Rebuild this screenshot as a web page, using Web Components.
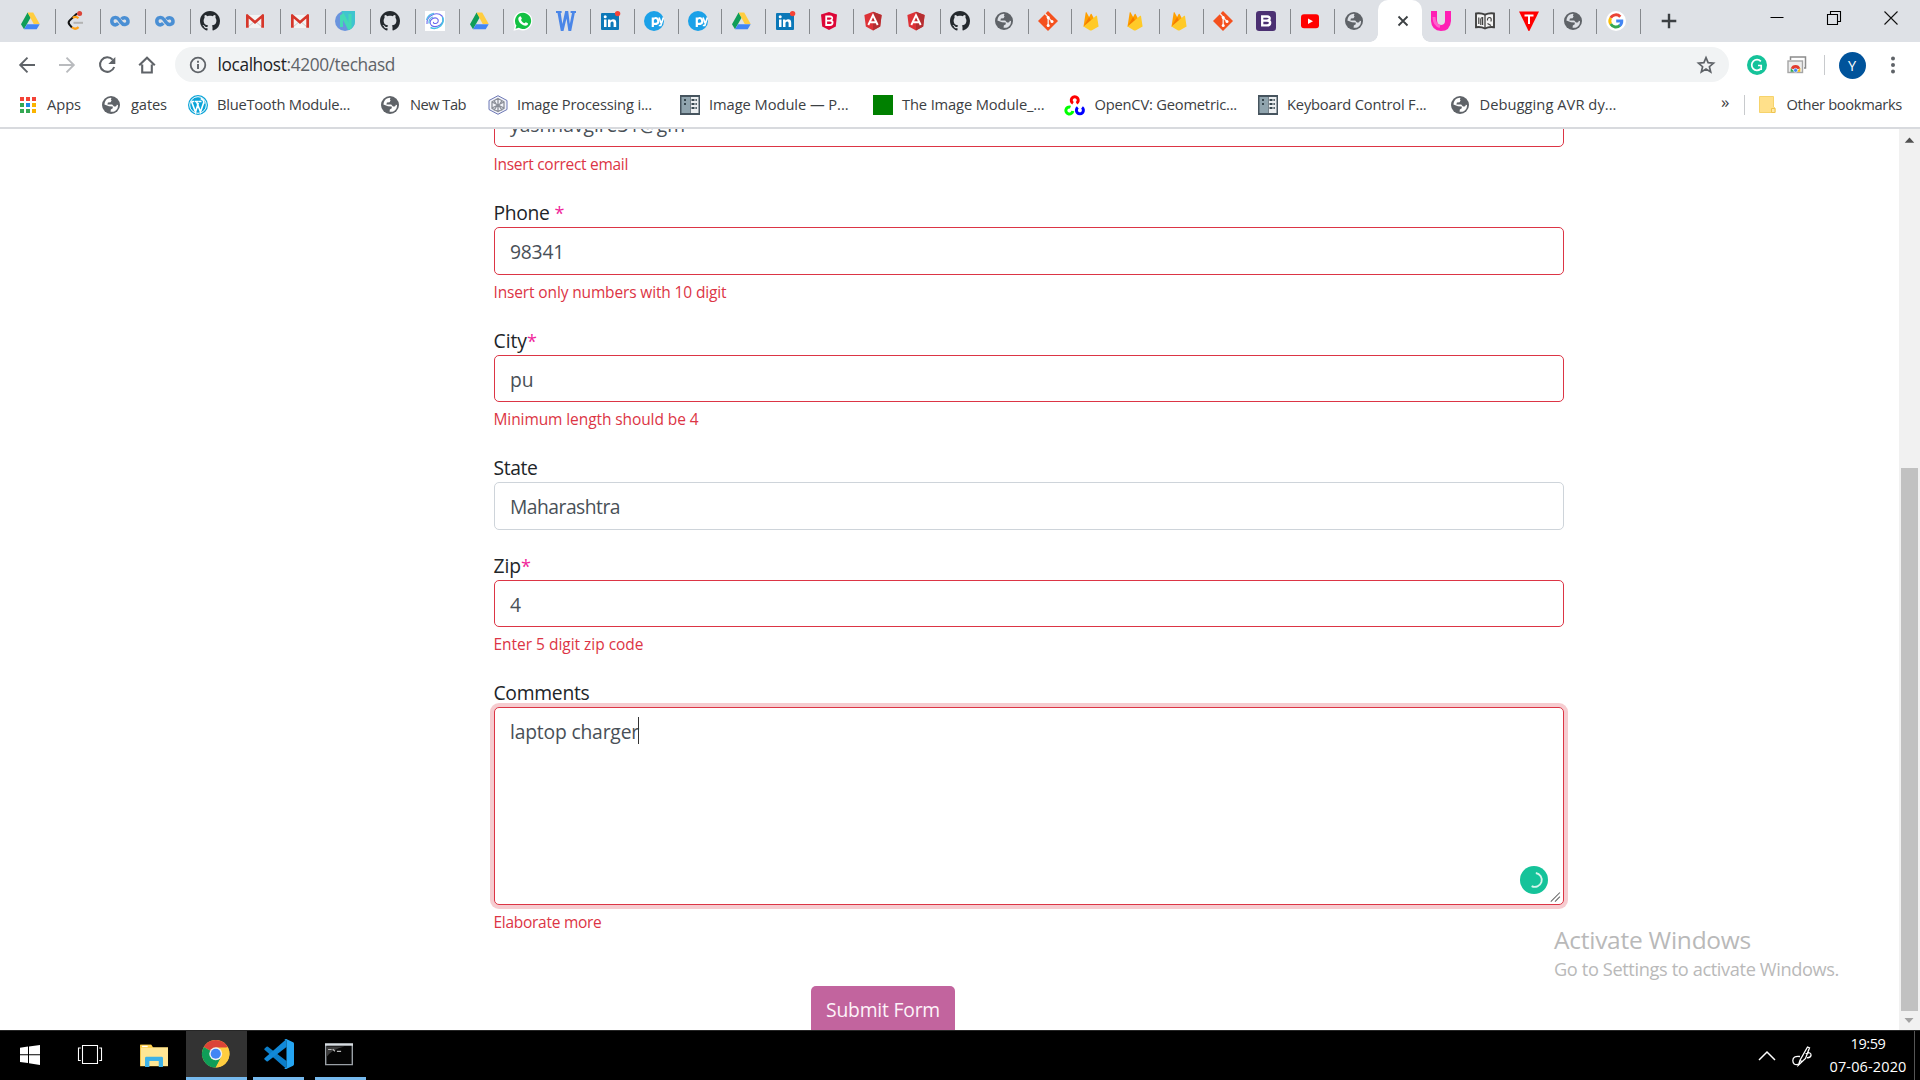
<!DOCTYPE html>
<html lang="en">
<head>
<meta charset="utf-8">
<title>techasd</title>
<style>
html,body{margin:0;height:100%;overflow:hidden;background:#fff}
body{font-family:"Open Sans","Noto Sans",sans-serif}
</style>
</head>
<body>
<desktop-screen></desktop-screen>
<script>
const ICONS = {
drive:`<path fill="#0f9d58" d="M7.6 1.5 1 13.2 4 18.2 10.7 6.6z"/><path fill="#ffcd40" d="M7.6 1.5h5.6l6.5 11.6h-6z"/><path fill="#4285f4" d="M7 13.2h12.7l-3 5H4z"/>`,
leet:`<path d="M12 2.5 4.5 9.6q-1.7 1.9 0 4L7 16.6" fill="none" stroke="#111" stroke-width="2"/><path d="M7 16.3q3 3 6.600-.2" fill="none" stroke="#ffa116" stroke-width="2.2"/><path d="M7.8 6.8q3-2.200 5.600.4" fill="none" stroke="#ffa116" stroke-width="2.2"/><path d="M8.500 11.800h9.500" stroke="#b3b3b3" stroke-width="2"/><circle cx="14.600" cy="2.600" r="2.500" fill="#db4437"/>`,
coursera:`<path d="M8.300 12.300C5.200 15.500 1.800 13.300 1.800 10.100c0-4 5-4.800 7.200-1.500l2.200 3c2.300 3.400 7.200 1.900 6.800-1.700-.5-3.500-4.600-3.900-6.500-1.800" fill="none" stroke="#4a8fd4" stroke-width="3.500"/>`,
github:`<path fill="#24292e" transform="scale(1.25)" d="M8 0C3.580 0 0 3.580 0 8c0 3.540 2.290 6.530 5.470 7.590.4.070.550-.170.550-.380 0-.190-.010-.820-.010-1.490-2.010.370-2.530-.490-2.690-.940-.090-.230-.480-.940-.820-1.130-.280-.150-.680-.520-.010-.530.630-.010 1.080.580 1.230.820.720 1.210 1.870.870 2.330.660.070-.520.280-.870.510-1.070-1.780-.2-3.640-.890-3.640-3.950 0-.870.310-1.590.820-2.150-.080-.2-.360-1.020.080-2.120 0 0 .670-.210 2.200.820.640-.180 1.320-.270 2-.270s1.360.090 2 .270c1.530-1.040 2.200-.820 2.200-.820.440 1.100.160 1.920.080 2.120.510.560.820 1.270.820 2.150 0 3.070-1.870 3.750-3.650 3.950.290.250.540.730.540 1.480 0 1.070-.010 1.930-.010 2.200 0 .210.150.460.550.380A8.010 8.010 0 0 0 16 8c0-4.420-3.580-8-8-8"/>`,
gmail:`<path fill="#f4f4f4" d="M2 4h16v13H2z"/><path d="m3 16 7-6 7 6" fill="none" stroke="#ccc" stroke-width="1"/><path fill="#d6372b" d="M1 4.200q0-1.200 1.300-1.200L10 9.600 17.700 3Q19 3 19 4.200v12.500h-2.700V7.600L10 12.900 3.700 7.600v9.100H1z"/>`,
nstd:`<path fill="#6a94de" d="M10 0h10v10A10 10 0 1 1 10 0z"/><path fill="#3fc4cf" d="M6.500 0H20v10q0 6-5.500 9H13z"/><path fill="#44d9b6" d="M5 4.500V16h3v-7l5 9.500q2 0 3.500-1V3h-3v8.500L8.500 2z"/>`,
swirl:`<path fill="#fff" d="M0 0h20v20H0z"/><g fill="none"><path d="M2 13C1 4.500 12 0 17 5q3 5-2 9-5 3-8.500.5Q3.500 11 7 8q4-2.500 6 .5 1 3-2 4-3 .3-2.500-1.700" stroke="#6a68ee" stroke-width="1.100"/><path d="M5.500 16.500q5 2.500 10-1.500 4-4.500 2-9" stroke="#45bfe4" stroke-width="1.500"/><path d="M1.500 9Q3.500 3 9 2.500M4 12.500q-.5-5 4-6.500" stroke="#58b9e8" stroke-width="1.300"/></g>`,
whatsapp:`<path fill="#fff" d="M10 .4a9.500 9.500 0 1 1-4.200 18.100L.5 19.700l1.300-5A9.500 9.500 0 0 1 10 .4z"/><path fill="#13c143" d="M10 1.800a8.100 8.100 0 1 1-4.200 15L2.500 17.800l.9-3.300A8.100 8.100 0 0 1 10 1.800z"/><path fill="#fff" d="M6.700 5.500c.6-.4 1-.3 1.300.3l.8 1.700c.2.500-.8 1.100-.8 1.500.7 1.500 1.900 2.600 3.400 3.200.5 0 1-1.200 1.500-1l1.900 1c.4.300.1 1.300-.3 1.800-3 2.500-9.300-2-9.200-6.200 0-1 .6-1.900 1.400-2.300z"/>`,
word:`<path d="M0 0h5.600v2H4.700l1.700 11L9.200 0h3l1.600 13L16 2h-1.400V0H20v2h-1.200l-3.600 18h-2.800L10.500 7.500 7.500 20H4.800L1.500 2H0z" fill="#4a86e8"/>`,
linkedin:`<rect x="1" y="2" width="18" height="17" rx="1" fill="#0b78b8"/><path fill="#fff" d="M4 8.500h2.500V16H4zM8 8.500h2.400v1q2.500-2.300 4.800-.7 1 1 1 3V16h-2.600v-3.700q0-2-1.500-1.800-1.600 0-1.600 1.800V16H8z"/><circle cx="5.200" cy="5.800" r="1.500" fill="#fff"/><circle cx="17.600" cy="2.600" r="2.700" fill="#f44336"/>`,
py:`<circle cx="10" cy="10" r="10" fill="#1ba1e8"/><path d="M8.800 16V6.500M8.800 8.500q3.500-3 5 0t-1.300 4.300H9" fill="none" stroke="#fff" stroke-width="2.200"/><path d="m15 6.500 2 5.500M19.400 6.500l-2.600 8h-2" fill="none" stroke="#fff" stroke-width="1.700"/>`,
bshield:`<path fill="#dd0637" d="M10 1 18 3.500l-1.200 12L10 19l-6.800-3.500L2 3.500z"/><path d="M7.200 5.500h4q2.300.2 2 2.200-.3 1.700-2 1.800 2.600.3 2.400 2.300-.3 2.200-2.600 2.200H7.200zM7.500 9.600h3.700" fill="none" stroke="#fff" stroke-width="1.800"/>`,
angular:`<path fill="#dd3237" d="M10 .8 18.600 4l-1.400 11.500L10 19.400l-7.200-3.900L1.400 4z"/><path fill="#b52e31" d="M10 .8 18.600 4l-1.400 11.500L10 19.400z"/><path d="M5.300 14 10 4.200 14.700 14M7 11.200h6" fill="none" stroke="#fff" stroke-width="1.900"/>`,
globe:`<circle cx="10" cy="10" r="9" fill="#5f6368"/><path fill="#dee1e6" class="land" d="M10.500 2.900q-1.300 1.500.1 2.600l-1 1.700-2.700.3-.5 1.900h4.800l1.800 2.200h1.500q1.300-.4 1.200-1.900l1.300.3q.2 4.200-3.200 6.200-2.100 1-4.200.5l.2-2.200 2-1.200-.1-1.800-3.700-.3-4.600-1.800q.5-4.800 4.200-6.100 1.600-.6 2.900-.4z"/>`,
git:`<path fill="#f4511e" d="M10 0 20 10 10 20 0 10z" stroke-linejoin="round"/><path d="m7 2.500 3.200 3.700v8.500M10.200 6.500l3.700 4" fill="none" stroke="#f6e7e0" stroke-width="1.400"/><g fill="#fff"><circle cx="10.200" cy="6.500" r="1.500"/><circle cx="10.200" cy="14.500" r="1.500"/><circle cx="14" cy="10.500" r="1.500"/></g>`,
firebase:`<path fill="#ffa000" d="m2.500 15.500 2.200-14q.4-.8.9 0l2.500 4.600L9.700 3q.4-.7.900 0L17 15.500z"/><path fill="#f57c00" d="m2.500 15.500 5.600-9.400 3 5.400z"/><path fill="#ffca28" d="M2.500 15.500 15.200 4.800q.7-.4.800.3l1.600 10.500-6.600 3.700q-1.200.6-2.300 0z"/>`,
boot:`<rect width="20" height="20" rx="3.200" fill="#4b3072"/><path d="M6.200 5.500h5q2.700.2 2.500 2.200-.2 1.700-2.300 1.800 3 .3 2.800 2.500-.3 2.400-3 2.400h-5zM6.500 9.700h5" fill="none" stroke="#fff" stroke-width="2.300"/>`,
youtube:`<rect x="1" y="3.200" width="18" height="14" rx="3" fill="#f00"/><path fill="#fff" d="m8 7.500 5 2.800-5 2.800z"/>`,
ulogo:`<path fill="#ff1fb4" d="M0 0h6v9.500q.4 4.500 4.500 4.500 3.500-.4 3.500-4V0h6v10q-.8 10-10 10Q.6 19.400 0 10z"/><path d="M3 6q.2 8 6 9.500" stroke="#ff62cc" stroke-width="3" fill="none"/>`,
book:`<path fill="#f4f4f4" stroke="#424242" stroke-width="1.900" d="M1 2.500q5-.8 9 1.200 4-2 9-1.200v13.700q-5-.8-9 1.300-4-2.100-9-1.300z"/><path d="M10 3.500V17.500" stroke="#424242" stroke-width="1.300"/><path d="M3.800 6.500v6.500M5.800 14V8q.3-1.500 1.800-1.500V14M16 14.500l-3.500-2M12.500 9.500q-.3-3 2-3t1.500 4" fill="none" stroke="#424242" stroke-width="1.200"/>`,
tri:`<path fill="#f00" d="M0 .5h20L10.400 20H9.500z"/><path d="M5.500 4.500h9M10 4.500V13" stroke="#fff" stroke-width="2"/>`,
google:`<circle cx="10" cy="10" r="10" fill="#fff"/><g fill="none" stroke-width="2.900"><path stroke="#ea4335" d="M4.700 6.900A6 6 0 0 1 14.300 5.700"/><path stroke="#fbbc05" d="M4.700 13.100a6 6 0 0 1 0-6.200"/><path stroke="#34a853" d="M14 14.400a6 6 0 0 1-9.300-1.300"/><path stroke="#4285f4" d="M10.200 10h5.600q.1 3-2.100 4.600"/></g>`,
plus:`<path d="M10 2.700v14.600M2.700 10h14.600" stroke="#3c4043" stroke-width="2.400"/>`,
tabx:`<path d="m5.500 5.500 9 9m0-9-9 9" stroke="#3c4043" stroke-width="1.800"/>`,
min:`<path d="M3.500 9.500h13" stroke="#000"/>`,
restore:`<path d="M3.500 6.500h10v10h-10zM6.500 6V3.500h10v10H14" fill="none" stroke="#000" stroke-width="1.100"/>`,
close:`<path d="m3.500 3.500 13 13m0-13-13 13" stroke="#111" stroke-width="1.100"/>`,
back:`<path d="M18 10H3.500m7-7.300L3.200 10l7.300 7.300" fill="none" stroke="currentColor" stroke-width="1.900"/>`,
fwd:`<path d="M2 10h14.500M9.500 2.700l7.300 7.300-7.300 7.300" fill="none" stroke="currentColor" stroke-width="1.900"/>`,
reload:`<path d="M15.700 4.600A7.300 7.300 0 1 0 17.200 12" fill="none" stroke="currentColor" stroke-width="2"/><path fill="currentColor" d="M18.300 2v7h-7z"/>`,
home:`<path d="M2.200 10.200 10 2.700l7.800 7.500M5.200 9.500v8h9.600v-8" fill="none" stroke="currentColor" stroke-width="2.100"/>`,
info:`<circle cx="10" cy="10" r="7.300" fill="none" stroke="currentColor" stroke-width="1.800"/><path d="M10 9v5M10 5.800v2" stroke="currentColor" stroke-width="1.900"/>`,
star:`<path d="m10 2.700 2.100 5 5.400.5-4.100 3.500 1.300 5.300-4.700-2.900L5.300 17l1.300-5.300-4.100-3.500 5.400-.5z" fill="none" stroke="#5f6368" stroke-width="1.700"/>`,
grammarly:`<circle cx="10" cy="10" r="10" fill="#15c39a"/><path d="M13.800 6.300A5.300 5.300 0 1 0 13.500 14M15 10.500h-4M14.200 10.500v4.500" fill="none" stroke="#fff" stroke-width="1.700"/>`,
gallery:`<path d="M3.500 5V2h15v11H17" fill="none" stroke="#8c8c8c" stroke-width="1.500"/><rect x="1" y="6" width="14.500" height="11.500" fill="#eee" stroke="#a5a5a5" stroke-width="1.400"/><path fill="#e33b2e" d="M3.800 13.500a5 5 0 0 1 9.500 0l-4.500 1z"/><path fill="#34a853" d="M3.800 13.300 7.500 16.800H3.600z"/><path fill="#fbbc05" d="M9.500 16.800 13.300 13v3.800z"/><circle cx="8.600" cy="15.300" r="2" fill="#4285f4" stroke="#fff" stroke-width=".6"/>`,
kebab:`<g fill="#5f6368"><circle cx="10" cy="3.500" r="2"/><circle cx="10" cy="10" r="2"/><circle cx="10" cy="16.500" r="2"/></g>`,
apps:`<path fill="#f44336" d="M2 2h4v4H2zM8 2h4v4H8zM14 2h4v4h-4z"/><path fill="#34a853" d="M2 8h4v4H2zM2 14h4v4H2z"/><path fill="#1e88e5" d="M8 8h4v4H8z"/><path fill="#34a853" d="M8 14h4v4H8z"/><path fill="#fbb400" d="M14 8h4v4h-4zM14 14h4v4h-4z"/>`,
wp:`<circle cx="10" cy="10" r="10" fill="#0ba4d8"/><circle cx="10" cy="10" r="8.300" fill="none" stroke="#fff" stroke-width="1"/><path d="m3.500 6.500 4 10.500L10.400 8M6.200 6.500h-3M10 6.500H6.800M8.500 6.500l4 10.500 3.200-9.500M13.500 6.500H10.200M12.700 3.600q3.500.8 3.200 5" fill="none" stroke="#fff" stroke-width="1.600"/>`,
hex:`<g fill="none" stroke="#6b76b4" stroke-width="1"><path fill="#f3f4fa" d="m10 .7 9 4.800v9l-9 4.800-9-4.800v-9z"/><path stroke="#8b8f98" stroke-width="1.300" d="m10 3.500 6 3.300v6.500l-6 3.300-6-3.300V6.800zM4 7l12 6M16 7 4 13M10 3.500v13M6 5.500l3 5-3 5M14 5.500l-3 5 3 5"/></g>`,
module:`<path fill="#46545e" d="M0 0h20v20H0z"/><path fill="#90a4ae" d="M1.500 2H10v16H1.500z"/><path fill="#eceff1" d="M10.700 2h7.800v16h-7.800z"/><path d="M4 5h2M4 9h2M11.500 5h3M11.500 9h3M11.500 13h3" stroke="#37474f" stroke-width="2.200"/><path d="M15.500 5h1.300M15.500 9h1.300M15.500 13h1.300" stroke="#37474f" stroke-width="2.200"/>`,
green:`<path fill="#008000" d="M0 0h20v20H0z"/>`,
opencv:`<g fill="none" stroke-width="3"><path stroke="#f00" d="M8 8.300a3.500 3.500 0 1 1 3.500 0"/><path stroke="#0f0" d="M5.500 12.200A3.500 3.500 0 1 0 7.800 16"/><path stroke="#00f" d="M12.800 12.500a3.500 3.500 0 1 0 4.200 0"/></g>`,
folder:`<path fill="#ffe08a" stroke="#f6d36b" d="M2.500 1.500h14V12l1.500 1v4.500H2.500z"/><path fill="#ffe9a6" stroke="#efc44f" d="M14.500 13.500H18v4h-3.500z"/>`,
win:`<path fill="#fff" d="M0 2.700 8 1.600v7.700H0zM9 1.500 20 0v9.300H9zM0 10.300h8V18l-8-1.100zM9 10.300h11V20L9 18.300z"/>`,
task:`<path d="M3.750 1.300h12.500v16.500H3.750zM2.300 3.700H.4v11.400h1.900M17.700 3.700h1.900v11.400h-1.900" fill="none" stroke="#fff" stroke-width=".9"/>`,
explorer:`<path fill="#e8b32e" d="M0 2h8l1.500 2H20v14H0z"/><path fill="#ffe694" d="M.5 4H20v13.800H.5z"/><path fill="#ffd251" d="M.3 2H8l1 2.400H.3z"/><path fill="#fff" d="M1.500 2.800h4v1h-4z"/><path fill="#3db2e8" d="M3.600 18.500V12q0-1 1-1h10.800q1 0 1 1v6.500h-3V14H6.700v4.500z"/>`,
chrome:`<circle cx="10" cy="10" r="10" fill="#fbc940"/><path fill="#db4437" d="M10 10 1.300 5A10 10 0 0 1 18.700 5z"/><path fill="#0f9d58" d="M10 10 1.300 5A10 10 0 0 0 10 20l4-7z"/><path fill="#ffcd40" d="M10 5.500h8.900A10 10 0 0 1 10 20l4-8z"/><circle cx="10" cy="10" r="4.700" fill="#f1f1f1"/><circle cx="10" cy="10" r="3.700" fill="#4285f4"/>`,
vscode:`<path fill="#0b7dc8" d="m.4 6.300 1.300-1.100q.4-.3.900 0L15 14.600V20L.3 7.200q-.3-.5.1-.9z"/><path fill="#1189d8" d="m.4 13.700 1.300 1.100q.4.300.9 0L15 5.400V0L.3 12.800q-.3.500.1.900z"/><path fill="#25a5f2" d="m14.800 0 4.600 2.200q.6.300.6.900v13.800q0 .6-.6.900L14.800 20q-.8.200-1.300-.4l1.500-.6V1L13.500.4Q14 0 14.800 0z"/>`,
cmd:`<path fill="#050505" stroke="#9aa0a6" stroke-width="1" d="M.5 2.500h19v15H.5z"/><path fill="#3a3a3a" d="M1 4h13Q5 6 1 12z"/><path fill="#d7dde2" d="M0 1.700h20v1.800H0z"/><path d="M2.200 6.300h2.500M5.500 6l1.600 1.600M8.500 7.700h3" stroke="#bbb" stroke-width=".9"/>`,
up:`<path d="m2 14 8-8 8 8" fill="none" stroke="#fff" stroke-width="1.500"/>`,
pen:`<path d="M6.500 19 8 14.300 15.500 1l2 .8-4 10.700zM8 14.300l2 1.500M8 10.500Q1 9.500.8 14.500 1 19.500 6 18.500M13.500 7.500q6-2 5.500 2-.8 2.500-4 2.200" fill="none" stroke="#fff" stroke-width="1.300"/>`,
sup:`<path fill="#505050" d="M5.500 13 10 8l4.500 5z"/>`,
sdown:`<path fill="#a3a3a3" d="M5.500 8 10 13l4.500-5z"/>`,
busy:`<circle cx="10" cy="10" r="10" fill="#15c39a"/><path d="M11.300 5a5 5 0 1 1-3 9.400" fill="none" stroke="#d5f5ec" stroke-width="1.300"/>`,
grip:`<path d="m4 18 13-13M10 18l7-7" stroke="#666" stroke-width="1.500"/>`
};

// Small helper: attach an open root and fill it.
class Base extends HTMLElement {
  connectedCallback() {
    if (!this.shadowRoot) this.attachShadow({mode: 'open'}).innerHTML = this.render();
    this.ready?.();
  }
  at(n, d = '') { return this.getAttribute(n) ?? d; }
}

// <ui-icon name size [h]>
customElements.define('ui-icon', class extends Base {
  render() {
    const s = this.at('size', '20'), h = this.at('h', s);
    return `<style>:host{display:block;flex:none;width:${s}px;height:${h}px}svg{display:block;overflow:visible}:host([light]) .land{fill:#fff}</style>
    <svg width="${s}" height="${h}" viewBox="0 0 20 20" preserveAspectRatio="none">${ICONS[this.at('name')]}</svg>`;
  }
});

// <fit-text w>: tracks its text so that the run is w pixels wide.
customElements.define('fit-text', class extends Base {
  render() {
    return `<style>:host{display:inline-block;white-space:pre;flex:none}span{display:inline-block}</style><span><slot></slot></span>`;
  }
  ready() {
    const w = parseFloat(this.at('w'));
    if (!w) return;
    const span = this.shadowRoot.querySelector('span');
    const n = [...this.textContent].length;
    const real = span.getBoundingClientRect().width;
    span.style.letterSpacing = ((w - real) / n) + 'px';
  }
});

customElements.define('browser-tab', class extends Base {
  render() {
    const w = this.at('w');
    return `<style>:host{display:flex;box-sizing:border-box;width:${w}px;height:42px;flex:none;align-items:center;justify-content:space-between;padding-left:${this.at('pad', '9')}px}
    i{width:1px;height:25px;background:#86898d;margin-bottom:-1px}</style><ui-icon name="${this.at('icon')}"></ui-icon>${this.hasAttribute('nosep') ? '' : '<i></i>'}`;
  }
});

customElements.define('active-tab', class extends Base {
  render() {
    return `<style>:host{display:flex;width:44px;height:42px;flex:none;background:#fff;border-radius:10px 10px 0 0;align-items:center;justify-content:center;position:relative}
    ui-icon{margin-left:5px}
    :host::before,:host::after{content:"";position:absolute;bottom:0;width:8px;height:8px}
    :host::before{left:-8px;background:radial-gradient(circle at 0 0,transparent 7.500px,#fff 8px)}
    :host::after{right:-8px;background:radial-gradient(circle at 100% 0,transparent 7.500px,#fff 8px)}</style><ui-icon name="tabx"></ui-icon>`;
  }
});

customElements.define('tab-strip', class extends Base {
  render() {
    const names = ['drive','leet','coursera','coursera','github','gmail','gmail','nstd','github','swirl','drive','whatsapp','word','linkedin','py','py','drive','linkedin','bshield','angular','angular','github','globe','git','firebase','firebase','firebase','git','boot','youtube','globe'];
    const seps = [55,100,145,190,235,280,325,370,415,459,503,546,590,634,678,721,765,809,853,896,940,984,1028,1071,1115,1159,1203,1246,1290,1334];
    let x = 0;
    const left = names.map((n, i) => {
      const end = i < seps.length ? seps[i] + 1 : 1378, w = end - x; x = end;
      return `<browser-tab icon="${n}" w="${w}" ${i ? '' : 'pad="20"'} ${i < seps.length ? '' : 'nosep'}></browser-tab>`;
    }).join('');
    x = 1422;
    const right = [['ulogo',1465],['book',1509],['tri',1553],['globe',1596],['google',1640]].map(([n, s]) => {
      const w = s + 1 - x; x = s + 1;
      return `<browser-tab icon="${n}" w="${w}"></browser-tab>`;
    }).join('');
    return `<style>:host{display:flex;height:42px;background:#dee1e6}
    .new{margin:11px 0 0 17.500px}.ctl{display:flex;margin:8px 19px 0 auto;gap:37px}</style>
    ${left}<active-tab></active-tab>${right}<ui-icon class="new" name="plus"></ui-icon>
    <div class="ctl"><ui-icon name="min"></ui-icon><ui-icon name="restore"></ui-icon><ui-icon name="close"></ui-icon></div>`;
  }
});

customElements.define('tool-bar', class extends Base {
  render() {
    return `<style>:host{display:flex;height:45px;align-items:center;color:#5f6368}
    .nav{display:flex;gap:20px;margin-left:17px;width:158px}.dim{color:#b9bbbe}
    .omni{display:flex;align-items:center;box-sizing:border-box;width:1554px;height:35px;border-radius:18px;background:#f1f3f4;padding:0 13px 0 12.500px;font-size:17.300px}
    .omni .info{margin-right:10px}.omni .star{margin-left:auto}
    .url{display:flex;line-height:34px}b{font-weight:400;color:#202124}
    .g{margin-left:17.500px}.gal{margin-left:20px}i{width:1px;height:20px;background:#c8cacd;margin-left:17px}
    .av{width:27px;height:27px;border-radius:50%;background:#00539b;color:#fff;font-size:14.500px;line-height:27px;text-align:center;margin-left:14px;margin-top:1px}
    .k{margin-left:17px}</style>
    <div class="nav"><ui-icon name="back"></ui-icon><ui-icon class="dim" name="fwd"></ui-icon><ui-icon name="reload"></ui-icon><ui-icon name="home"></ui-icon></div>
    <div class="omni"><ui-icon class="info" name="info"></ui-icon><div class="url"><b><fit-text w="69">localhost</fit-text></b><fit-text w="108.5">:4200/techasd</fit-text></div><ui-icon class="star" name="star"></ui-icon></div>
    <ui-icon class="g" name="grammarly"></ui-icon><ui-icon class="gal" name="gallery"></ui-icon><i></i><div class="av">Y</div><ui-icon class="k" name="kebab" size="20"></ui-icon>`;
  }
});

customElements.define('book-mark', class extends Base {
  render() {
    return `<style>:host{display:flex;align-items:center;flex:none;margin-left:${this.at('ml', '0')}px}fit-text{margin:-2px 0 0 ${this.at('gap', '10')}px}</style>
    <ui-icon light name="${this.at('icon')}"></ui-icon><fit-text w="${this.at('w')}">${this.textContent}</fit-text>`;
  }
});

customElements.define('bookmarks-bar', class extends Base {
  render() {
    const list = [['apps',18,9,34,'Apps'],['globe',101,10,36,'gates'],['wp',188,9,133,'BlueTooth Module...'],['globe',380,10,56,'New Tab'],['hex',488,9,135,'Image Processing i...'],['module',680,9,139.5,'Image Module — P...'],['green',873,9,142.5,'The Image Module_...'],['opencv',1065,9.5,142.5,'OpenCV: Geometric...'],['module',1258,9,139.5,'Keyboard Control F...'],['globe',1450,9.5,137,'Debugging AVR dy...']];
    let x = 0;
    const items = list.map(([n, at, g, w, t]) => {
      const m = at - x; x = at + 20 + g + w;
      return `<book-mark icon="${n}" ml="${m}" gap="${g}" w="${w}">${t}</book-mark>`;
    }).join('');
    return `<style>:host{display:flex;align-items:center;border-bottom:2px solid #d8dade;color:#3c4043;font-size:14.700px;line-height:36px;box-sizing:border-box;height:42px;padding-bottom:4px}
    .more{margin-left:auto;font-size:17px;margin-right:12.500px;margin-top:-6px}i{width:1px;height:20px;background:#c8cacd}</style>
    ${items}<fit-text class="more" w="10">»</fit-text><i></i><book-mark icon="folder" ml="12" gap="10" w="115.5">Other bookmarks</book-mark><span style="width:18px"></span>`;
  }
});

// <form-field label value help w...>: label, box and validation message.
customElements.define('form-field', class extends Base {
  render() {
    const bad = this.hasAttribute('help'), area = this.hasAttribute('area');
    return `<style>:host{display:block;margin-bottom:20px;font-size:19.300px;line-height:30px;color:#212529}
    .l{box-sizing:border-box;height:30px;display:flex;padding-top:1px;margin-left:-.5px}.l em{font-style:normal;color:#f0269a;font-size:18px}
    .box{box-sizing:border-box;height:${area ? 197.5 : 47.5}px;border:1px solid ${bad ? '#dc3545' : '#ced4da'};border-radius:5px;padding:9px 15px 0;color:#495057;display:flex;align-items:flex-start;position:relative;background:#fff;
      ${area ? 'box-shadow:0 0 0 4px rgba(220,53,69,.25)' : ''}}
    .h{margin:5px 0 0 -.5px;height:25px;line-height:25px;font-size:15.500px;color:#dc3545}
    .caret{width:1px;height:27px;background:#333;margin:0 0 0 -1px}
    .busy{position:absolute;right:15px;bottom:10px}.grip{position:absolute;right:1px;bottom:1px}</style>
    ${this.hasAttribute('label') ? `<div class="l"><fit-text w="${this.at('lw')}">${this.at('label')}</fit-text>${this.hasAttribute('star') ? `<em style="margin-left:${this.at('star') || 0}px">*</em>` : ''}</div>` : ''}
    <div class="box"><fit-text w="${this.at('vw')}">${this.at('value')}</fit-text>${area ? '<span class="caret"></span><ui-icon class="busy" name="busy" size="28"></ui-icon><ui-icon class="grip" name="grip" size="14"></ui-icon>' : ''}</div>
    ${bad ? `<div class="h"><fit-text w="${this.at('hw')}">${this.at('help')}</fit-text></div>` : ''}`;
  }
});

customElements.define('scroll-bar', class extends Base {
  render() {
    return `<style>:host{display:flex;flex-direction:column;width:21px;background:#f1f1f1;align-items:center}
    .t{width:17px;margin-top:318px;height:543px;background:#c1c1c1}ui-icon{margin-left:-1px}.d{margin-top:-1px}</style>
    <ui-icon name="sup" size="21"></ui-icon><div class="t"></div><ui-icon class="d" name="sdown" size="20"></ui-icon>`;
  }
});

customElements.define('page-view', class extends Base {
  render() {
    return `<style>:host{display:flex;height:901px;overflow:hidden;position:relative;justify-content:space-between}
    form{display:block;width:1070px;margin:-29.200px 0 0 494px}
    .btn{display:flex;justify-content:center;width:144px;height:48px;margin:51px 0 0 317px;background:#c2649e;border-radius:5px;color:#fdf3f9;font-size:19.300px;line-height:48px;font-weight:500}
    .wm{position:absolute;left:1554px;top:794px;color:#b9b9b9}
    .wm div{font-size:24.500px;line-height:34px}.wm p{margin:-1px 0 0;font-size:18.200px;line-height:26px}</style>
    <form>
      <form-field value="yashnavgire31@gm" vw="175" help="Insert correct email" hw="134.5"></form-field>
      <form-field label="Phone" lw="56" star="5" value="98341" vw="54" help="Insert only numbers with 10 digit" hw="233"></form-field>
      <form-field label="City" lw="33.5" star value="pu" vw="23.5" help="Minimum length should be 4" hw="205"></form-field>
      <form-field label="State" lw="44" value="Maharashtra" vw="110"></form-field>
      <form-field label="Zip" lw="27.500" star value="4" vw="10.8" help="Enter 5 digit zip code" hw="150"></form-field>
      <form-field area label="Comments" lw="96" value="laptop charger" vw="129" help="Elaborate more" hw="108"></form-field>
      <div class="btn"><fit-text w="114">Submit Form</fit-text></div>
    </form>
    <scroll-bar></scroll-bar>
    <div class="wm"><div><fit-text w="197">Activate Windows</fit-text></div><p><fit-text w="285">Go to Settings to activate Windows.</fit-text></p></div>`;
  }
});

customElements.define('task-bar', class extends Base {
  render() {
    return `<style>:host{display:flex;height:50px;background:#000;box-sizing:border-box;border-top:1px solid #262626;color:#fff;align-items:center}
    .a{display:flex;box-sizing:border-box;height:49px;align-items:center;justify-content:center;padding-bottom:1px}
    .on{border-bottom:3px solid #76b9ed;padding-top:1px}.sel{background:#333}
    .clock{display:flex;flex-direction:column;align-items:center;font-size:14.500px;line-height:23px;width:78px;margin:-2px 0 0 17px}
    .r{display:flex;margin-left:auto;align-items:center;height:49px}
    .r i{width:1px;height:49px;background:#555;margin:0 5px 0 7px}</style>
    <div class="a" style="width:60px"><ui-icon name="win"></ui-icon></div>
    <div class="a" style="width:60px"><ui-icon name="task" size="24" h="22"></ui-icon></div>
    <div class="a" style="width:66px;padding-left:2px"><ui-icon name="explorer" size="28" h="27"></ui-icon></div>
    <div class="a on sel" style="width:61px;padding-right:2px"><ui-icon name="chrome" size="27.500"></ui-icon></div>
    <div class="a on" style="width:51px;margin-left:6px"><ui-icon name="vscode" size="30"></ui-icon></div>
    <div class="a on" style="width:51px;margin-left:11px;padding-right:3px"><ui-icon name="cmd" size="28" h="27"></ui-icon></div>
    <div class="r"><ui-icon name="up" style="margin-left:-1px"></ui-icon><ui-icon name="pen" style="margin-left:15px"></ui-icon>
    <div class="clock"><fit-text w="35">19:59</fit-text><fit-text w="77">07-06-2020</fit-text></div><i></i></div>`;
  }
});

customElements.define('desktop-screen', class extends Base {
  render() {
    return `<style>:host{display:block;width:1920px;height:1080px;overflow:hidden;background:#fff}</style>
    <tab-strip></tab-strip><tool-bar></tool-bar><bookmarks-bar></bookmarks-bar><page-view></page-view><task-bar></task-bar>`;
  }
});
</script>
</body>
</html>
